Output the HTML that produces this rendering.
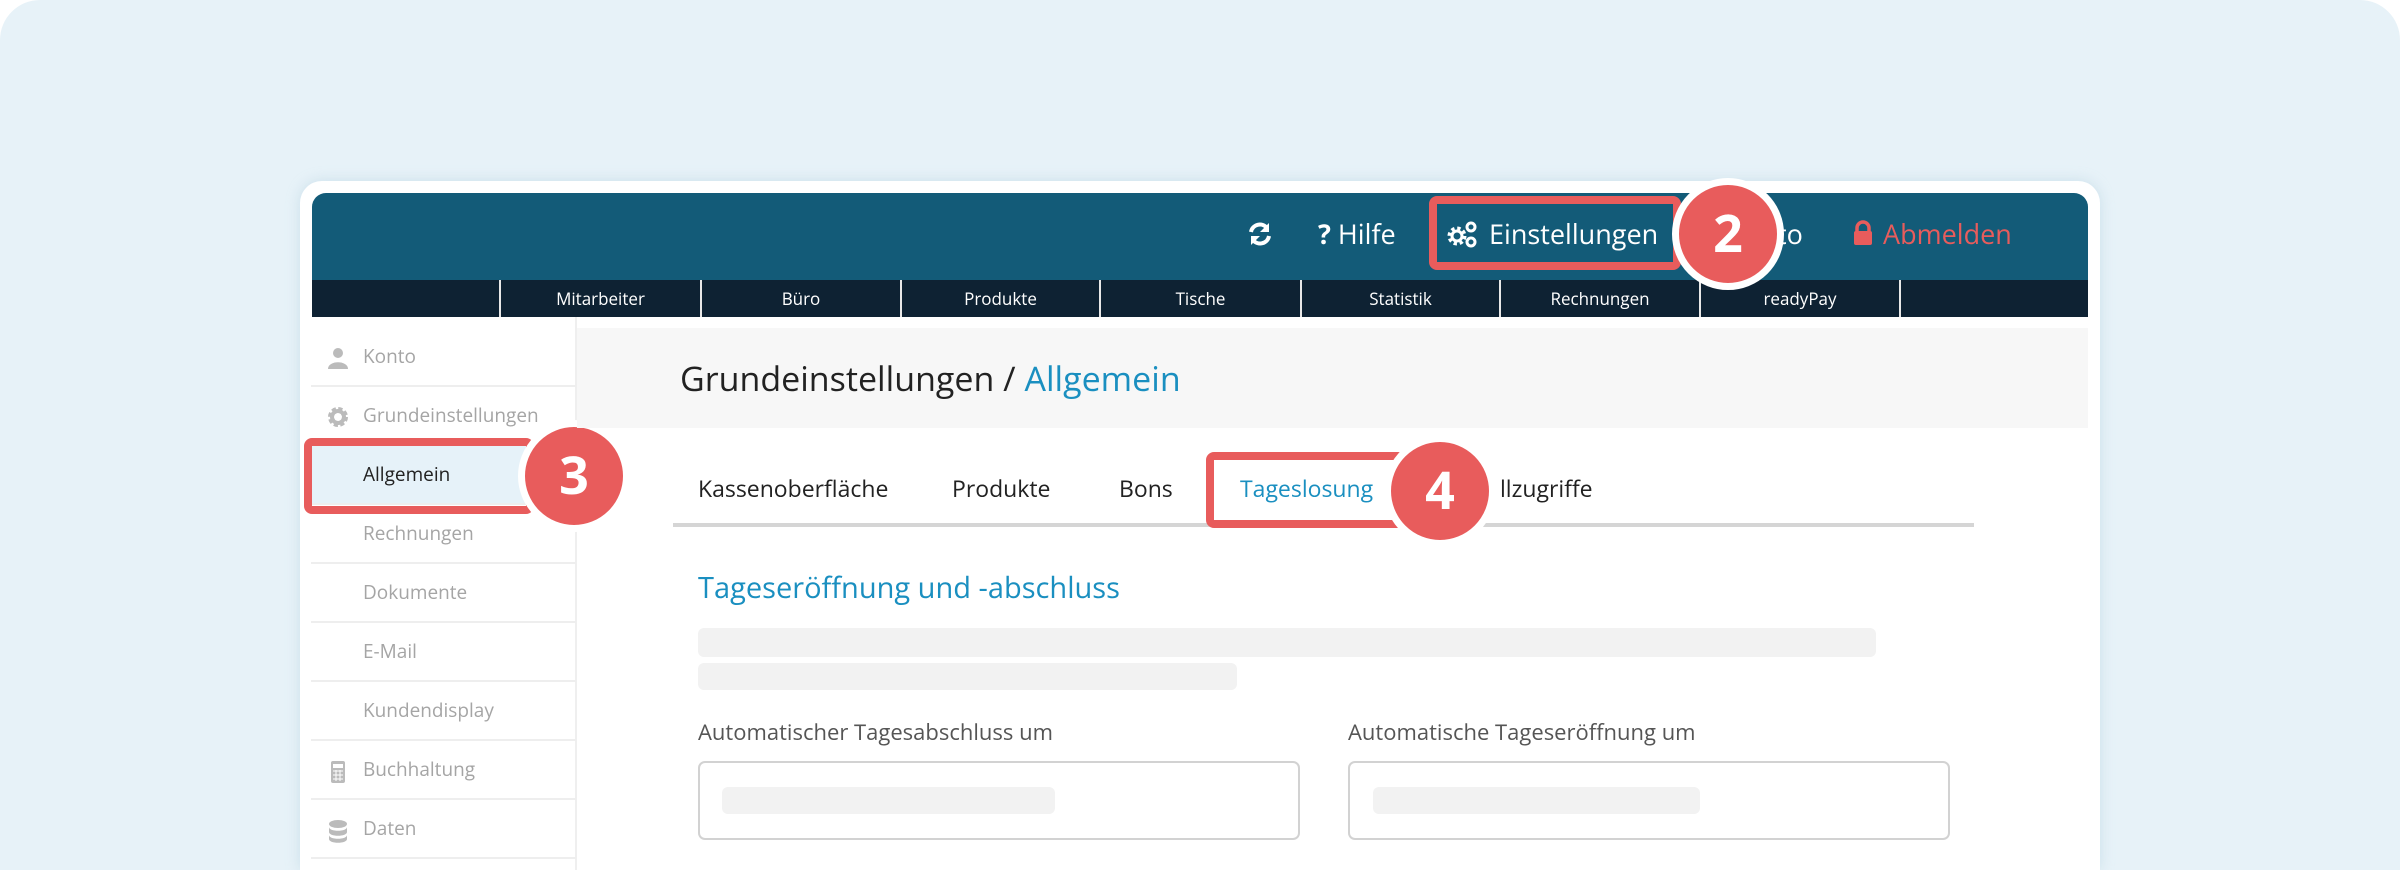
<!DOCTYPE html>
<html><head><meta charset="utf-8"><style>
*{margin:0;padding:0;box-sizing:border-box}
html,body{width:2400px;height:870px;overflow:hidden}
body{background:#fff;position:relative;font-family:"Open Sans","Liberation Sans","DejaVu Sans",sans-serif}
.wrap{position:absolute;left:0;top:0;width:2400px;height:870px;overflow:hidden}
.bg{position:absolute;left:0;top:0;width:2400px;height:870px;background:#e7f2f8;border-radius:40px 40px 0 0}
.card{position:absolute;left:300px;top:181px;width:1800px;height:689px;background:#fff;border-radius:22px 22px 0 0;box-shadow:0 0 14px rgba(150,190,210,.35)}
.hdr{position:absolute;left:312px;top:193px;width:1776px;height:88px;background:#135b78;border-radius:14px 14px 0 0}
.nav{position:absolute;left:312px;top:280px;width:1776px;height:37px;background:#0e2233}
.nav div{position:absolute;top:0;height:37px;border-left:2px solid #e8e8e8;color:#fff;font-size:17px;line-height:37px;text-align:center}
.ab{position:absolute;font-size:27px;line-height:40px;color:#fff}
.side{position:absolute;left:311px;top:328px;width:265px;height:542px;overflow:hidden}
.row{height:59px;border-bottom:2px solid #eeeeee;font-size:19px;color:#a5a5a5;line-height:57px;padding-left:52px;position:relative}
.row svg{position:absolute;left:16px;top:19px}
.vline{position:absolute;left:575px;top:317px;width:2px;height:553px;background:#efefef}
.ghead{position:absolute;left:577px;top:328px;width:1511px;height:100px;background:#f7f7f7}
.t{position:absolute;white-space:nowrap}
.red{position:absolute;border:8px solid #e85c5c;border-radius:8px}
.circ{position:absolute;width:112px;height:112px;border-radius:50%;background:#e85c5c;border:7px solid #fff;color:#fff;font-weight:bold;font-size:52px;text-align:center;line-height:96px}
.bar{position:absolute;background:#f2f2f2;border-radius:6px}
.inp{position:absolute;border:2px solid #d2d2d2;border-radius:7px;background:#fff}
</style></head><body><div class="wrap">
<div class="bg"></div>
<div class="card"></div>
<div class="hdr"></div>
<div class="nav">
<div style="left:187px;width:201px">Mitarbeiter</div>
<div style="left:388px;width:200px">Büro</div>
<div style="left:588px;width:199px">Produkte</div>
<div style="left:787px;width:201px">Tische</div>
<div style="left:988px;width:199px">Statistik</div>
<div style="left:1187px;width:200px">Rechnungen</div>
<div style="left:1387px;width:200px">readyPay</div>
<div style="left:1587px;width:1px"></div>
</div>
<svg style="position:absolute;left:1247px;top:221px" width="26" height="26" viewBox="0 0 26 26"><path d="M4 11 A9 9 0 0 1 20 7" stroke="#fff" stroke-width="4" fill="none"/><path d="M22 2 L22 11 L13 11Z" fill="#fff"/><path d="M22 15 A9 9 0 0 1 6 19" stroke="#fff" stroke-width="4" fill="none"/><path d="M4 24 L4 15 L13 15Z" fill="#fff"/></svg>
<div class="ab" style="left:1318px;top:214px"><b>?</b> Hilfe</div>
<svg style="position:absolute;left:1446px;top:219px" width="32" height="30" viewBox="0 0 32 30"><circle cx="11" cy="17" r="7" fill="none" stroke="#fff" stroke-width="5" stroke-dasharray="3 2.5"/><circle cx="11" cy="17" r="5" fill="none" stroke="#fff" stroke-width="3"/><circle cx="25" cy="8" r="4" fill="none" stroke="#fff" stroke-width="3"/><circle cx="25" cy="23" r="4" fill="none" stroke="#fff" stroke-width="3"/></svg>
<div class="ab" style="left:1489px;top:214px">Einstellungen</div>
<div class="red" style="left:1429px;top:196px;width:252px;height:74px"></div>
<div class="ab" style="left:1777px;top:214px">to</div>
<svg style="position:absolute;left:1853px;top:220px" width="20" height="26" viewBox="0 0 20 26"><path d="M4 12 V8 A6 6 0 0 1 16 8 V12" stroke="#e85c5c" stroke-width="3.5" fill="none"/><rect x="1" y="11" width="18" height="14" rx="2" fill="#e85c5c"/></svg>
<div class="ab" style="left:1883px;top:214px;color:#e85c5c">Abmelden</div>
<div class="circ" style="left:1672px;top:178px">2</div>
<div class="vline"></div>
<div class="side">
<div class="row"><svg width="22" height="22" viewBox="0 0 22 22"><circle cx="11" cy="6" r="5" fill="#bbb"/><path d="M1 22 C1 13 21 13 21 22Z" fill="#bbb"/></svg>Konto</div>
<div class="row"><svg width="22" height="22" viewBox="0 0 22 22"><circle cx="11" cy="11" r="7" fill="none" stroke="#bbb" stroke-width="6" stroke-dasharray="3.5 2"/><circle cx="11" cy="11" r="6" fill="none" stroke="#bbb" stroke-width="4"/></svg>Grundeinstellungen</div>
<div class="row" style="background:#e6f2f9;color:#222">Allgemein</div>
<div class="row">Rechnungen</div>
<div class="row">Dokumente</div>
<div class="row">E-Mail</div>
<div class="row">Kundendisplay</div>
<div class="row"><svg width="22" height="24" viewBox="0 0 22 24"><rect x="4" y="1" width="14" height="22" rx="2" fill="#bbb"/><rect x="6" y="4" width="10" height="4" fill="#fff"/><path d="M6 11h10M6 15h10M6 19h10M9 10v11M13 10v11" stroke="#fff" stroke-width="1"/></svg>Buchhaltung</div>
<div class="row"><svg width="22" height="24" viewBox="0 0 22 24"><ellipse cx="11" cy="5" rx="9" ry="4" fill="#bbb"/><path d="M2 8 C2 13 20 13 20 8 V13 C20 18 2 18 2 13Z" fill="#bbb"/><path d="M2 16 C2 21 20 21 20 16 V20 C20 25 2 25 2 20Z" fill="#bbb"/></svg>Daten</div>
</div>
<div class="red" style="left:304px;top:438px;width:230px;height:76px"></div>
<div class="circ" style="left:518px;top:420px">3</div>
<div class="ghead"></div>
<div class="t" style="left:680px;top:355px;font-size:34px;color:#222">Grundeinstellungen / <span style="color:#1a8fc0">Allgemein</span></div>
<div style="position:absolute;left:673px;top:523px;width:1301px;height:4px;background:#d5d5d5"></div>
<div class="t" style="left:698px;top:472px;font-size:23px;color:#222">Kassenoberfläche</div>
<div class="t" style="left:952px;top:472px;font-size:23px;color:#222">Produkte</div>
<div class="t" style="left:1119px;top:472px;font-size:23px;color:#222">Bons</div>
<div class="red" style="left:1206px;top:452px;width:200px;height:76px;background:#fff"></div>
<div class="t" style="left:1240px;top:472px;font-size:23px;color:#1a8fc0">Tageslosung</div>
<div class="t" style="left:1500px;top:472px;font-size:23px;color:#222">llzugriffe</div>
<div class="circ" style="left:1384px;top:435px">4</div>
<div class="t" style="left:698px;top:568px;font-size:29px;color:#1a8fc0">Tageseröffnung und -abschluss</div>
<div class="bar" style="left:698px;top:628px;width:1178px;height:29px"></div>
<div class="bar" style="left:698px;top:663px;width:539px;height:27px"></div>
<div class="t" style="left:698px;top:717px;font-size:22px;color:#555">Automatischer Tagesabschluss um</div>
<div class="t" style="left:1348px;top:717px;font-size:22px;color:#555">Automatische Tageseröffnung um</div>
<div class="inp" style="left:698px;top:761px;width:602px;height:79px"></div>
<div class="inp" style="left:1348px;top:761px;width:602px;height:79px"></div>
<div class="bar" style="left:722px;top:787px;width:333px;height:27px"></div>
<div class="bar" style="left:1373px;top:787px;width:327px;height:27px"></div>
</div></body></html>
